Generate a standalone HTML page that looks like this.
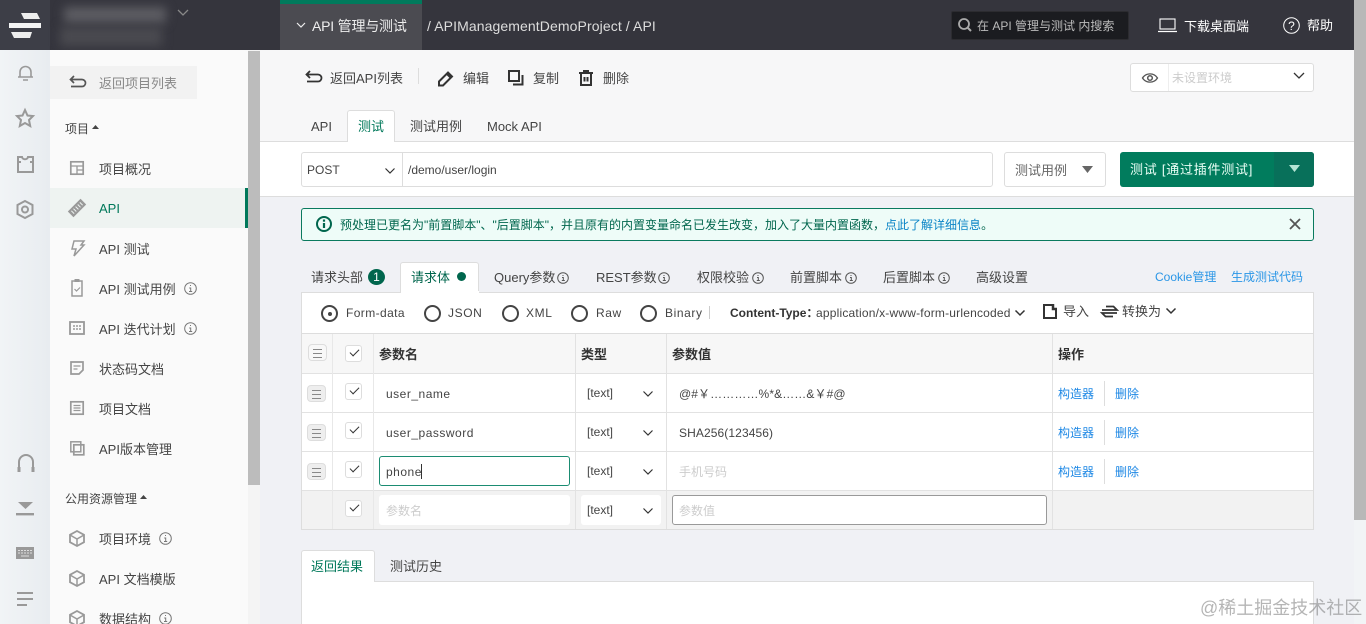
<!DOCTYPE html>
<html><head><meta charset="utf-8">
<style>
*{box-sizing:border-box}
html,body{margin:0;padding:0;width:1366px;height:624px;overflow:hidden;background:#f0f2f5}
body{position:relative;font-family:"Liberation Sans","WenQuanYi Zen Hei","Noto Sans CJK SC",sans-serif;font-size:13px;color:#444}
.b{position:absolute}
.t{position:absolute;white-space:nowrap;line-height:20px;height:20px;margin-top:1px}
svg{position:absolute;overflow:visible}
.g{fill:none;stroke:#999;stroke-width:2}
.k{fill:none;stroke:#333;stroke-width:2}
.c{fill:none;stroke:#333;stroke-width:1.2}
.l{color:#1e88e5}
.ck{position:absolute;width:17px;height:17px;background:#fff;border:1px solid #ddd;border-radius:3px}
.ck:after{content:"";position:absolute;left:3.5px;top:3px;width:8px;height:4px;border-left:1.4px solid #333;border-bottom:1.4px solid #333;transform:rotate(-45deg)}
.dr{position:absolute;width:19px;height:17px;background:#eee;border:1px solid #ddd;border-radius:4px}
.dr:after{content:"";position:absolute;left:4px;top:4px;width:9px;height:7px;border-top:1px solid #888;border-bottom:1px solid #888;background:linear-gradient(#888,#888) center/100% 1px no-repeat}
.r{position:absolute;width:17px;height:17px;border:2.4px solid #444;border-radius:50%;background:#fff}
</style></head><body>

<!-- top bar -->
<div class="b" style="left:0;top:0;width:1354px;height:50px;background:#35353d"></div>
<div class="b" style="left:0;top:0;width:50px;height:50px;background:#3d3e47"></div>
<svg style="left:0;top:0" width="50" height="50"><polygon points="21,13 37,13 40,19 24,19" fill="#eee"/><rect x="9" y="23" width="32" height="5" fill="#f4f4f4"/><polygon points="11,32 32,32 30,38 14,38" fill="#eee"/></svg>
<div class="b" style="left:64px;top:7px;width:102px;height:16px;background:#5d5d63;filter:blur(5px)"></div>
<div class="b" style="left:60px;top:27px;width:102px;height:19px;background:#4a4a50;filter:blur(5px)"></div>
<svg style="left:177px;top:9px" width="12" height="8"><path d="M1 1l5 5 5-5" fill="none" stroke="#888" stroke-width="1.3"/></svg>
<div class="b" style="left:280px;top:0;width:142px;height:50px;background:#4b4b51"></div>
<div class="b" style="left:280px;top:0;width:142px;height:4px;background:#007a5c"></div>
<svg style="left:296px;top:22px" width="10" height="6"><path d="M1 1l4 4 4-4" fill="none" stroke="#eee" stroke-width="1.2"/></svg>
<div class="t" style="left:312px;top:15px;color:#eee;font-size:14px;letter-spacing:-.2px">API 管理与测试</div>
<div class="t" style="left:427px;top:15px;color:#ddd;font-size:14px;letter-spacing:.1px">/ APIManagementDemoProject / API</div>
<div class="b" style="left:951px;top:11px;width:178px;height:29px;background:#1b1c20;border:1px solid #2c2c30;border-radius:2px"></div>
<svg style="left:958px;top:18px" width="14" height="14"><circle cx="6" cy="6" r="5" fill="none" stroke="#aaa" stroke-width="1.8"/><path d="M10 10l3 3" stroke="#aaa" stroke-width="2"/></svg>
<div class="t" style="left:977px;top:15px;color:#bbb;font-size:12px">在 API 管理与测试 内搜索</div>
<svg style="left:1158px;top:18px" width="20" height="15"><rect x="2" y="1" width="15" height="10" fill="none" stroke="#fff" stroke-width="1.1"/><path d="M0 13.5h19" stroke="#fff" stroke-width="1.2"/></svg>
<div class="t" style="left:1184px;top:16px;color:#fff">下载桌面端</div>
<svg style="left:1283px;top:17px" width="17" height="17"><circle cx="8.5" cy="8.5" r="7.8" fill="none" stroke="#fff" stroke-width="1"/><text x="8.5" y="13" text-anchor="middle" font-size="12" fill="#fff" font-family="Liberation Sans">?</text></svg>
<div class="t" style="left:1307px;top:15px;color:#fff">帮助</div>

<!-- page scrollbar -->
<div class="b" style="left:1354px;top:0;width:12px;height:520px;background:#b8b8b8"></div>
<div class="b" style="left:1354px;top:520px;width:12px;height:104px;background:#f2f4f6"></div>

<!-- icon rail -->
<div class="b" style="left:0;top:50px;width:50px;height:574px;background:linear-gradient(90deg,#f1f4f6,#e8ecf0)"></div>
<svg style="left:16px;top:64px" width="20" height="18"><path d="M4 13V8a5.500 5.500 0 0 1 11 0v5zM2 13h15M7 16h5" class="g" style="stroke-width:1.600"/></svg>
<svg style="left:15px;top:108px" width="20" height="20"><polygon points="10,2 12.500,7.500 18,8 14,12 15.200,18 10,15 4.800,18 6,12 2,8 7.500,7.500" class="g"/></svg>
<svg style="left:16px;top:156px" width="20" height="18"><path d="M2 1h4c.5 3 5.500 3 6 0h5v15H2zM2 6h3M14 6h3" class="g"/></svg>
<svg style="left:16px;top:200px" width="20" height="20"><polygon points="9,1 16.500,5 16.500,14 9,18 1.500,14 1.500,5" class="g"/><circle cx="9" cy="9.500" r="3" class="g"/></svg>
<svg style="left:17px;top:453px" width="18" height="20"><path d="M2 18V9a7 7 0 0 1 14 0v9" class="g"/><path d="M2 14v5M16 14v5" class="g" style="stroke-width:3"/></svg>
<svg style="left:16px;top:501px" width="19" height="16"><polygon points="2,1 17,1 9.500,8" fill="#999"/><rect y="12" width="18" height="2.400" fill="#999"/></svg>
<svg style="left:16px;top:547px" width="19" height="13"><rect width="18" height="12" fill="#999"/><path d="M2 3.500h14M2 6h14" stroke="#ddd" stroke-width="1" stroke-dasharray="2 1"/><path d="M5 9h8" stroke="#ddd" stroke-width="1"/></svg>
<svg style="left:17px;top:592px" width="18" height="15"><path d="M0 1h16M0 7h16M0 13h10" class="g"/></svg>

<!-- nav -->
<div class="b" style="left:50px;top:50px;width:198px;height:574px;background:#fafafa"></div>
<div class="b" style="left:248px;top:50px;width:12px;height:574px;background:#f4f4f4"></div>
<div class="b" style="left:248px;top:51px;width:12px;height:434px;background:#bcbcbc"></div>
<div class="b" style="left:50px;top:66px;width:147px;height:33px;background:#f2f2f2"></div>
<svg style="left:69px;top:75px" width="18" height="15"><path d="M5 1L1.500 4.500 5 8M2 4.500h11a3 3 0 0 1 0 7H2" fill="none" stroke="#555" stroke-width="1.700"/></svg>
<div class="t" style="left:99px;top:73px;color:#888">返回项目列表</div>
<div class="t" style="left:65px;top:118px;color:#444;font-size:12px">项目</div>
<svg style="left:92px;top:125px" width="7" height="5"><polygon points="3.500,0 7,4 0,4" fill="#444"/></svg>

<div class="b" style="left:50px;top:188px;width:198px;height:40px;background:#eef3f1"></div>
<div class="b" style="left:245px;top:188px;width:3px;height:40px;background:#00785a"></div>

<svg style="left:70px;top:161px" width="14" height="14"><rect x=".8" y=".8" width="12.400" height="12.400" fill="none" stroke="#999" stroke-width="1.700"/><path d="M1 5h12M7 5v8M7 9h6" stroke="#999" stroke-width="1.300"/></svg>
<div class="t" style="left:99px;top:159px">项目概况</div>
<svg style="left:68px;top:199px" width="18" height="18"><g transform="rotate(-45 9 9)"><rect x="0" y="5" width="18" height="8" fill="#999"/><path d="M3 7v4M6 7v4M9 7v4M12 7v4M15 7v4" stroke="#eef3f1"/></g></svg>
<div class="t" style="left:99px;top:198px;color:#00785a">API</div>
<svg style="left:71px;top:240px" width="14" height="17"><polygon points="3,1 13,1 10,5 13,5 3,16 5,9 1,9" fill="none" stroke="#999" stroke-width="1.500"/></svg>
<div class="t" style="left:99px;top:239px">API 测试</div>
<svg style="left:71px;top:279px" width="12" height="18"><rect x="1" y="2" width="10" height="15" fill="none" stroke="#999" stroke-width="1.500"/><rect x="3.500" y="0" width="5" height="3" fill="#999"/><path d="M3.500 10l2 2 3.500-3.500" fill="none" stroke="#999" stroke-width="1.200"/></svg>
<div class="t" style="left:99px;top:279px">API 测试用例</div>
<svg style="left:184px;top:282px" width="13" height="13"><circle cx="6.500" cy="6.500" r="5.800" fill="none" stroke="#777"/><path d="M6.500 3v1M5.200 6h1.500v3.500M5 9.500h3.200" fill="none" stroke="#777"/></svg>
<svg style="left:69px;top:321px" width="16" height="14"><rect x="1" y="1" width="14" height="12" fill="none" stroke="#999" stroke-width="1.800"/><path d="M4 5h8M4 8h8" stroke="#999" stroke-width="1.500" stroke-dasharray="2 1"/></svg>
<div class="t" style="left:99px;top:319px">API 迭代计划</div>
<svg style="left:184px;top:322px" width="13" height="13"><circle cx="6.500" cy="6.500" r="5.800" fill="none" stroke="#777"/><path d="M6.500 3v1M5.200 6h1.500v3.500M5 9.500h3.200" fill="none" stroke="#777"/></svg>
<svg style="left:70px;top:361px" width="14" height="14"><path d="M1 1h12v8l-4 4H1z" fill="none" stroke="#999" stroke-width="1.700"/><path d="M3.500 5h7M3.500 8h4" stroke="#999" stroke-width="1.300"/></svg>
<div class="t" style="left:99px;top:359px">状态码文档</div>
<svg style="left:70px;top:401px" width="14" height="14"><rect x=".8" y=".8" width="12.400" height="12.400" fill="none" stroke="#999" stroke-width="1.700"/><path d="M3.500 4.500h7M3.500 7h7M3.500 9.500h7" stroke="#999" stroke-width="1.200"/></svg>
<div class="t" style="left:99px;top:399px">项目文档</div>
<svg style="left:70px;top:441px" width="15" height="15"><rect x=".8" y=".8" width="10" height="10" fill="none" stroke="#999" stroke-width="1.500"/><rect x="3.800" y="3.800" width="10" height="10" fill="none" stroke="#999" stroke-width="1.700"/></svg>
<div class="t" style="left:99px;top:439px">API版本管理</div>
<div class="t" style="left:65px;top:488px;font-size:12px">公用资源管理</div>
<svg style="left:140px;top:495px" width="7" height="5"><polygon points="3.500,0 7,4 0,4" fill="#444"/></svg>
<svg style="left:69px;top:530px" width="16" height="17"><polygon points="8,1 15,4.800 15,12.200 8,16 1,12.200 1,4.800" fill="none" stroke="#999" stroke-width="1.800"/><path d="M1 5l7 4 7-4M8 9v7" fill="none" stroke="#999" stroke-width="1.500"/></svg>
<div class="t" style="left:99px;top:529px">项目环境</div>
<svg style="left:159px;top:532px" width="13" height="13"><circle cx="6.500" cy="6.500" r="5.800" fill="none" stroke="#777"/><path d="M6.500 3v1M5.200 6h1.500v3.500M5 9.500h3.200" fill="none" stroke="#777"/></svg>
<svg style="left:69px;top:570px" width="16" height="17"><polygon points="8,1 15,4.800 15,12.200 8,16 1,12.200 1,4.800" fill="none" stroke="#999" stroke-width="1.800"/><path d="M1 5l7 4 7-4M8 9v7" fill="none" stroke="#999" stroke-width="1.500"/></svg>
<div class="t" style="left:99px;top:569px">API 文档模版</div>
<svg style="left:69px;top:610px" width="16" height="17"><polygon points="8,1 15,4.800 15,12.200 8,16 1,12.200 1,4.800" fill="none" stroke="#999" stroke-width="1.800"/><path d="M1 5l7 4 7-4M8 9v7" fill="none" stroke="#999" stroke-width="1.500"/></svg>
<div class="t" style="left:99px;top:609px">数据结构</div>
<svg style="left:159px;top:612px" width="13" height="13"><circle cx="6.500" cy="6.500" r="5.800" fill="none" stroke="#777"/><path d="M6.500 3v1M5.200 6h1.500v3.500M5 9.500h3.200" fill="none" stroke="#777"/></svg>

<!-- main header -->
<div class="b" style="left:260px;top:50px;width:1094px;height:91px;background:#f7f7f8"></div>
<div class="b" style="left:260px;top:141px;width:1094px;height:56px;background:#fff;border-top:1px solid #ddd;border-bottom:1px solid #ddd"></div>
<div class="b" style="left:260px;top:197px;width:1094px;height:427px;background:#f0f1f5"></div>

<svg style="left:305px;top:70px" width="18" height="15"><path d="M5 1L1.500 4.500 5 8M2 4.500h11a3 3 0 0 1 0 7H2" fill="none" stroke="#333" stroke-width="1.800"/></svg>
<div class="t" style="left:330px;top:68px">返回API列表</div>
<div class="b" style="left:418px;top:68px;width:1px;height:16px;background:#ddd"></div>
<svg style="left:437px;top:70px" width="18" height="17"><path d="M2 11.500L11 2.500l4 4-9 9H2z" class="k"/><path d="M10 4l4 4" class="k"/></svg>
<div class="t" style="left:463px;top:68px">编辑</div>
<svg style="left:508px;top:70px" width="16" height="16"><rect x="1" y="1" width="10" height="10" class="k"/><path d="M5 14.500h9.500V5" class="k"/></svg>
<div class="t" style="left:533px;top:68px">复制</div>
<svg style="left:579px;top:70px" width="15" height="16"><path d="M0 3h14M5 3V1h4v2" class="k"/><path d="M2 3v12h10V3M5.500 7v4.500M8.500 7v4.500" class="k"/></svg>
<div class="t" style="left:603px;top:68px">删除</div>

<div class="b" style="left:1130px;top:63px;width:184px;height:29px;background:#fff;border:1px solid #ddd;border-radius:3px"></div>
<div class="b" style="left:1168px;top:64px;width:1px;height:27px;background:#eee"></div>
<svg style="left:1142px;top:72px" width="16" height="12"><path d="M.5 6C4 .5 12 .5 15.500 6 12 11.500 4 11.500.500 6z" fill="none" stroke="#555" stroke-width="1.300"/><circle cx="8" cy="6" r="2.300" fill="none" stroke="#555" stroke-width="1.500"/></svg>
<div class="t" style="left:1172px;top:67px;color:#ccc;font-size:12px">未设置环境</div>
<svg style="left:1293px;top:72px" width="12" height="8"><path d="M1 1l5 5 5-5" fill="none" stroke="#333" stroke-width="1.300"/></svg>

<div class="t" style="left:311px;top:116px">API</div>
<div class="b" style="left:347px;top:110px;width:48px;height:32px;background:#fff;border:1px solid #ddd;border-bottom:0;border-radius:3px 3px 0 0"></div>
<div class="t" style="left:358px;top:116px;color:#00785a">测试</div>
<div class="t" style="left:410px;top:116px">测试用例</div>
<div class="t" style="left:487px;top:116px">Mock API</div>

<div class="b" style="left:301px;top:152px;width:692px;height:35px;background:#fff;border:1px solid #ddd;border-radius:3px"></div>
<div class="b" style="left:402px;top:153px;width:1px;height:33px;background:#ddd"></div>
<div class="t" style="left:307px;top:159px;font-size:12px">POST</div>
<svg style="left:385px;top:168px" width="10" height="6"><path d="M.5.500l4.500 4.500 4.500-4.500" fill="none" stroke="#333" stroke-width="1.200"/></svg>
<div class="t" style="left:408px;top:159px;font-size:12px">/demo/user/login</div>
<div class="b" style="left:1004px;top:152px;width:102px;height:35px;background:#fff;border:1px solid #ddd;border-radius:3px"></div>
<div class="t" style="left:1015px;top:160px;color:#666">测试用例</div>
<svg style="left:1082px;top:166px" width="12" height="8"><polygon points="0,0 11,0 5.500,7" fill="#666"/></svg>
<div class="b" style="left:1120px;top:152px;width:194px;height:35px;background:#017c5d;border-radius:3px"></div>
<div class="b" style="left:1274px;top:152px;width:40px;height:35px;background:#08705a;border-radius:0 3px 3px 0"></div>
<div class="t" style="left:1130px;top:159px;color:#eafff6;letter-spacing:.75px">测试 [通过插件测试]</div>
<svg style="left:1289px;top:165px" width="12" height="8"><polygon points="0,0 11,0 5.500,7" fill="#b5e5d5"/></svg>

<!-- alert -->
<div class="b" style="left:301px;top:208px;width:1013px;height:33px;background:#eefcf8;border:1px solid #0a7a5e;border-radius:3px"></div>
<svg style="left:316px;top:216px" width="16" height="16"><circle cx="8" cy="8" r="7" fill="none" stroke="#00664d" stroke-width="2"/><rect x="6.900" y="3.500" width="2.200" height="2.200" fill="#00664d"/><rect x="6.900" y="7" width="2.200" height="5" fill="#00664d"/></svg>
<div class="t" style="left:340px;top:214px;color:#00664d;font-size:12px">预处理已更名为"前置脚本"、"后置脚本"，并且原有的内置变量命名已发生改变，加入了大量内置函数，<span style="color:#0a84c6">点此了解详细信息</span>。</div>
<svg style="left:1289px;top:218px" width="12" height="12"><path d="M1 1l10 10M11 1L1 11" stroke="#555" stroke-width="1.800"/></svg>

<!-- request tabs -->
<div class="t" style="left:311px;top:267px">请求头部</div>
<div class="b" style="left:368px;top:269px;width:17px;height:16px;background:#00664d;border-radius:50%;color:#fff;font-size:12px;line-height:16px;text-align:center">1</div>
<div class="b" style="left:400px;top:262px;width:79px;height:31px;background:#fff;border:1px solid #ddd;border-bottom:0;border-radius:3px 3px 0 0"></div>
<div class="t" style="left:411px;top:267px;color:#00664d">请求体</div>
<div class="b" style="left:457px;top:272px;width:9px;height:9px;background:#00664d;border-radius:50%"></div>
<div class="t" style="left:494px;top:267px">Query参数</div>
<svg style="left:557px;top:272px" width="12" height="12"><circle cx="6" cy="6" r="5.300" fill="none" stroke="#555"/><path d="M6 3v1M5 5.500h1.300v3M4.800 8.500h3" fill="none" stroke="#555"/></svg>
<div class="t" style="left:596px;top:267px">REST参数</div>
<svg style="left:658px;top:272px" width="12" height="12"><circle cx="6" cy="6" r="5.300" fill="none" stroke="#555"/><path d="M6 3v1M5 5.500h1.300v3M4.800 8.500h3" fill="none" stroke="#555"/></svg>
<div class="t" style="left:697px;top:267px">权限校验</div>
<svg style="left:752px;top:272px" width="12" height="12"><circle cx="6" cy="6" r="5.300" fill="none" stroke="#555"/><path d="M6 3v1M5 5.500h1.300v3M4.800 8.500h3" fill="none" stroke="#555"/></svg>
<div class="t" style="left:790px;top:267px">前置脚本</div>
<svg style="left:845px;top:272px" width="12" height="12"><circle cx="6" cy="6" r="5.300" fill="none" stroke="#555"/><path d="M6 3v1M5 5.500h1.300v3M4.800 8.500h3" fill="none" stroke="#555"/></svg>
<div class="t" style="left:883px;top:267px">后置脚本</div>
<svg style="left:938px;top:272px" width="12" height="12"><circle cx="6" cy="6" r="5.300" fill="none" stroke="#555"/><path d="M6 3v1M5 5.500h1.300v3M4.800 8.500h3" fill="none" stroke="#555"/></svg>
<div class="t" style="left:976px;top:267px">高级设置</div>
<div class="t" style="left:1155px;top:266px;font-size:12px;color:#2a96e6">Cookie管理</div>
<div class="t" style="left:1231px;top:266px;font-size:12px;color:#2a96e6">生成测试代码</div>

<!-- body panel -->
<div class="b" style="left:301px;top:292px;width:1013px;height:238px;background:#fff;border:1px solid #ddd"></div>
<div class="b" style="left:400.500px;top:291px;width:78px;height:2px;background:#fff"></div>
<div class="r" style="left:321px;top:305px"></div>
<div class="b" style="left:327.500px;top:311.500px;width:4px;height:4px;background:#444;border-radius:50%"></div>
<div class="t" style="left:346px;top:302px;font-size:12px;letter-spacing:.4px">Form-data</div>
<div class="r" style="left:424px;top:305px"></div>
<div class="t" style="left:448px;top:302px;font-size:12px;letter-spacing:.6px">JSON</div>
<div class="r" style="left:502px;top:305px"></div>
<div class="t" style="left:526px;top:302px;font-size:12px;letter-spacing:.6px">XML</div>
<div class="r" style="left:571px;top:305px"></div>
<div class="t" style="left:596px;top:302px;font-size:12px;letter-spacing:.6px">Raw</div>
<div class="r" style="left:640px;top:305px"></div>
<div class="t" style="left:665px;top:302px;font-size:12px;letter-spacing:.6px">Binary</div>
<div class="b" style="left:709px;top:306px;width:1px;height:13px;background:#ccc"></div>
<div class="t" style="left:730px;top:302px;font-size:12px;font-weight:700;color:#333">Content-Type：</div>
<div class="t" style="left:816px;top:302px;font-size:12px;letter-spacing:.2px">application/x-www-form-urlencoded</div>
<svg style="left:1015px;top:310px" width="10" height="6"><path d="M.5.500l4.500 4.500 4.500-4.500" fill="none" stroke="#333" stroke-width="1.500"/></svg>
<svg style="left:1043px;top:304px" width="15" height="15"><path d="M9 1H1v13h12V5" class="k"/><path d="M10 0v5h4" class="k" style="stroke-width:2.500"/></svg>
<div class="t" style="left:1063px;top:301px">导入</div>
<svg style="left:1101px;top:304px" width="17" height="15"><path d="M1 6h15L12.500 2.500H5M16 9H1l3.500 3.500H12" fill="none" stroke="#333" stroke-width="1.800"/></svg>
<div class="t" style="left:1122px;top:301px">转换为</div>
<svg style="left:1166px;top:308px" width="10" height="6"><path d="M.5.500l4.500 4.500 4.500-4.500" fill="none" stroke="#333" stroke-width="1.500"/></svg>

<!-- table -->
<div class="b" style="left:302px;top:333px;width:1011px;height:41px;background:#f7f7f7;border-top:1px solid #ddd;border-bottom:1px solid #e2e2e2"></div>
<div class="b" style="left:302px;top:412px;width:1011px;height:1px;background:#e2e2e2"></div>
<div class="b" style="left:302px;top:451px;width:1011px;height:1px;background:#e2e2e2"></div>
<div class="b" style="left:302px;top:490px;width:1011px;height:39px;background:#f2f2f2;border-top:1px solid #e2e2e2"></div>
<div class="b" style="left:332px;top:334px;width:1px;height:195px;background:#e8e8e8"></div>
<div class="b" style="left:373px;top:334px;width:1px;height:195px;background:#e8e8e8"></div>
<div class="b" style="left:575px;top:334px;width:1px;height:195px;background:#e2e2e2"></div>
<div class="b" style="left:666px;top:334px;width:1px;height:195px;background:#e2e2e2"></div>
<div class="b" style="left:1052px;top:334px;width:1px;height:195px;background:#e2e2e2"></div>

<div class="dr" style="left:308px;top:344px;background:#f8f8f8"></div>
<div class="ck" style="left:345px;top:345px"></div>
<div class="t" style="left:379px;top:344px;font-weight:700;color:#333">参数名</div>
<div class="t" style="left:581px;top:344px;font-weight:700;color:#333">类型</div>
<div class="t" style="left:672px;top:344px;font-weight:700;color:#333">参数值</div>
<div class="t" style="left:1058px;top:344px;font-weight:700;color:#333">操作</div>

<div class="dr" style="left:307px;top:385px"></div>
<div class="ck" style="left:345px;top:383px"></div>
<div class="t" style="left:386px;top:383px;font-size:12px;letter-spacing:.5px">user_name</div>
<div class="t" style="left:587px;top:382px;font-size:12px">[text]</div>
<svg style="left:643px;top:391px" width="10" height="6"><path d="M.5.500l4.500 4.500 4.500-4.500" fill="none" stroke="#333" stroke-width="1.200"/></svg>
<div class="t" style="left:679px;top:383px;font-size:12px;letter-spacing:.1px">@#￥…………%*&amp;……&amp;￥#@</div>
<div class="t l" style="left:1058px;top:383px;font-size:12px">构造器</div>
<div class="b" style="left:1104px;top:381px;width:1px;height:25px;background:#ddd"></div>
<div class="t l" style="left:1115px;top:383px;font-size:12px">删除</div>

<div class="dr" style="left:307px;top:424px"></div>
<div class="ck" style="left:345px;top:422px"></div>
<div class="t" style="left:386px;top:422px;font-size:12px;letter-spacing:.5px">user_password</div>
<div class="t" style="left:587px;top:421px;font-size:12px">[text]</div>
<svg style="left:643px;top:430px" width="10" height="6"><path d="M.5.500l4.500 4.500 4.500-4.500" fill="none" stroke="#333" stroke-width="1.200"/></svg>
<div class="t" style="left:679px;top:422px;font-size:12px;letter-spacing:.1px">SHA256(123456)</div>
<div class="t l" style="left:1058px;top:422px;font-size:12px">构造器</div>
<div class="b" style="left:1104px;top:420px;width:1px;height:25px;background:#ddd"></div>
<div class="t l" style="left:1115px;top:422px;font-size:12px">删除</div>

<div class="dr" style="left:307px;top:463px"></div>
<div class="ck" style="left:345px;top:461px"></div>
<div class="b" style="left:379px;top:456px;width:191px;height:30px;background:#fff;border:1px solid #1b8c72;border-radius:3px"></div>
<div class="t" style="left:386px;top:461px;font-size:12px;letter-spacing:.5px">phone</div>
<div class="b" style="left:421px;top:464px;width:1px;height:15px;background:#333"></div>
<div class="t" style="left:587px;top:460px;font-size:12px">[text]</div>
<svg style="left:643px;top:469px" width="10" height="6"><path d="M.5.500l4.500 4.500 4.500-4.500" fill="none" stroke="#333" stroke-width="1.200"/></svg>
<div class="t" style="left:679px;top:461px;font-size:12px;color:#ccc">手机号码</div>
<div class="t l" style="left:1058px;top:461px;font-size:12px">构造器</div>
<div class="b" style="left:1104px;top:459px;width:1px;height:25px;background:#ddd"></div>
<div class="t l" style="left:1115px;top:461px;font-size:12px">删除</div>

<div class="ck" style="left:345px;top:500px"></div>
<div class="b" style="left:379px;top:495px;width:191px;height:30px;background:#fff;border-radius:3px"></div>
<div class="t" style="left:386px;top:500px;font-size:12px;color:#ccc">参数名</div>
<div class="b" style="left:581px;top:495px;width:80px;height:30px;background:#fff;border-radius:3px"></div>
<div class="t" style="left:587px;top:499px;font-size:12px">[text]</div>
<svg style="left:643px;top:508px" width="10" height="6"><path d="M.5.500l4.500 4.500 4.500-4.500" fill="none" stroke="#333" stroke-width="1.200"/></svg>
<div class="b" style="left:672px;top:495px;width:375px;height:30px;background:#fff;border:1px solid #999;border-radius:3px"></div>
<div class="t" style="left:679px;top:500px;font-size:12px;color:#ccc">参数值</div>

<!-- result -->
<div class="b" style="left:301px;top:581px;width:1013px;height:43px;background:#fff;border:1px solid #ddd;border-bottom:0"></div>
<div class="b" style="left:301px;top:550px;width:74px;height:32px;background:#fff;border:1px solid #ddd;border-bottom:0;border-radius:3px 3px 0 0"></div>
<div class="t" style="left:311px;top:556px;color:#00785a">返回结果</div>
<div class="t" style="left:390px;top:556px">测试历史</div>

<div class="t" style="left:1200px;top:595px;height:24px;line-height:24px;font-size:18px;color:rgba(120,120,120,.55)">@稀土掘金技术社区</div>
</body></html>
